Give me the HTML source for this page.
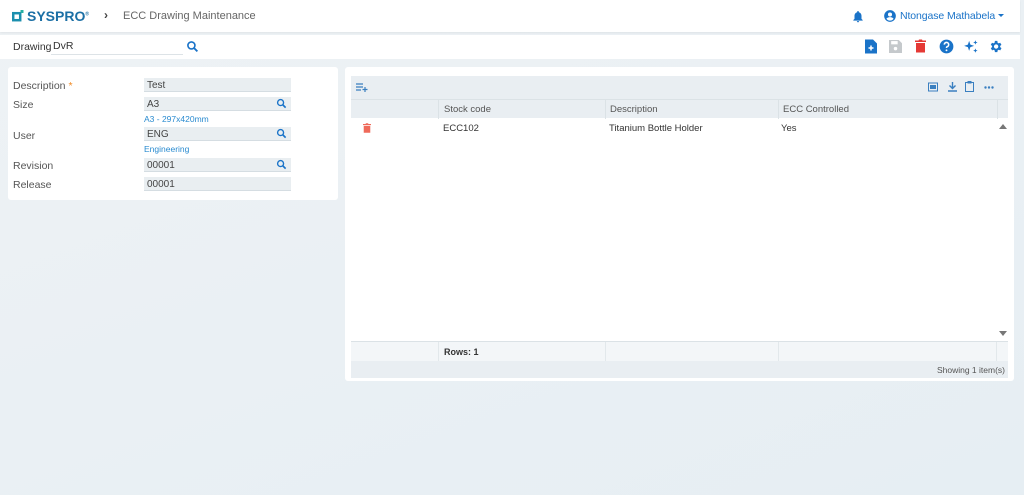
<!DOCTYPE html>
<html><head><style>
*{box-sizing:border-box;margin:0;padding:0}
body{width:1024px;height:495px;overflow:hidden;background:linear-gradient(160deg,#eef2f5,#e6eef3);font-family:"Liberation Sans",sans-serif;font-size:10px;color:#333;position:relative}
.abs{position:absolute}
.hdr{left:0;top:0;width:1020px;height:32px;background:#fff;box-shadow:0 1px 2px rgba(0,0,0,.06)}
.tb{left:0;top:35px;width:1020px;height:24px;background:#fff}
.panel{background:#fff;border-radius:3px}
.lbl{color:#555;font-size:10.5px}
.inp{background:#e9eef1;height:14px;border-bottom:1px solid #d5dde2;font-size:10px;padding:2px 3px;color:#444}
.hint{color:#2a8bd0;font-size:8.5px}
.ic{fill:#1a73c8}
</style></head><body>
<div class="abs hdr">
 <svg class="abs" style="left:12px;top:10px" width="12" height="12"><rect x="1.2" y="3.2" width="7" height="7" fill="none" stroke="#1b8fae" stroke-width="2.5"/><rect x="8.5" y="0" width="3" height="3" fill="#27b0a3"/></svg>
 <div class="abs" style="left:27px;top:8px;font-size:14px;font-weight:bold;color:#1b6fa5">SYSPRO<sup style="font-size:5px">®</sup></div>
 <div class="abs" style="left:104px;top:8px;font-size:12px;font-weight:bold;color:#444">›</div>
 <div class="abs" style="left:123px;top:10px;font-size:11px;color:#666">ECC Drawing Maintenance</div>
 <svg class="abs" style="left:851px;top:9px" width="14" height="15" viewBox="0 0 24 24"><path class="ic" d="M12 22a2 2 0 0 0 2-2h-4a2 2 0 0 0 2 2zm6-6V11c0-3-1.6-5.6-4.5-6.3V4a1.5 1.5 0 0 0-3 0v.7C7.6 5.4 6 8 6 11v5l-2 2v1h16v-1z"/></svg>
 <svg class="abs" style="left:883px;top:9px" width="14" height="14" viewBox="0 0 24 24"><path class="ic" d="M12 2a10 10 0 1 0 0 20 10 10 0 0 0 0-20zm0 4a3.5 3.5 0 1 1 0 7 3.5 3.5 0 0 1 0-7zm0 14a7.5 7.5 0 0 1-6-3c0-2 4-3.1 6-3.1s6 1.1 6 3.1a7.5 7.5 0 0 1-6 3z"/></svg>
 <div class="abs" style="left:900px;top:10px;font-size:10.5px;color:#1a73c8;letter-spacing:-0.1px">Ntongase Mathabela</div>
 <div class="abs" style="left:998px;top:14px;border:3px solid transparent;border-top:3px solid #1a73c8"></div>
</div>
<div class="abs tb">
 <div class="abs lbl" style="left:13px;top:6px;color:#333">Drawing</div>
 <div class="abs" style="left:51px;top:5px;width:132px;height:15px;border-bottom:1px solid #dde3e7;font-size:10.5px;padding-left:2px">DvR</div>
 <svg class="abs" style="left:186px;top:5px" width="13" height="13" viewBox="0 0 24 24"><circle cx="10" cy="10" r="6.5" fill="none" stroke="#1a73c8" stroke-width="3"/><path d="M15 15l6 6" stroke="#1a73c8" stroke-width="3.5"/></svg>
 <svg class="abs" style="left:865px;top:4px" width="12" height="15" viewBox="0 0 12 14"><path class="ic" d="M0 0h8l4 4v10H0z"/><path d="M6 6v5M3.5 8.5h5" stroke="#fff" stroke-width="1.5"/></svg>
 <svg class="abs" style="left:889px;top:5px" width="13" height="13" viewBox="0 0 12 12"><path fill="#c5c9cc" d="M0 0h9l3 3v9H0z"/><rect x="2" y="1" width="6" height="3" fill="#fff"/><circle cx="6" cy="8" r="1.6" fill="#fff"/></svg>
 <svg class="abs" style="left:915px;top:4px" width="11" height="14" viewBox="0 0 11 13"><path fill="#e53935" d="M0 1h3.5l.5-1h3l.5 1H11v1.5H0zM1 3.5h9V13H1z"/></svg>
 <svg class="abs" style="left:939px;top:4px" width="15" height="15" viewBox="0 0 24 24"><circle cx="12" cy="12" r="11" fill="#1a73c8"/><path d="M8.5 9a3.5 3.5 0 1 1 4.5 3.3c-.8.4-1 1-1 2" fill="none" stroke="#fff" stroke-width="2.5"/><circle cx="12" cy="18" r="1.5" fill="#fff"/></svg>
 <svg class="abs" style="left:963px;top:4px" width="16" height="15" viewBox="0 0 24 24"><path class="ic" d="M9 3l2 6 6 2-6 2-2 6-2-6-6-2 6-2zM19 2l1 2.5 2.5 1-2.5 1-1 2.5-1-2.5-2.5-1 2.5-1zM19 15l1 2.5 2.5 1-2.5 1-1 2.5-1-2.5-2.5-1 2.5-1z"/></svg>
 <svg class="abs" style="left:988px;top:4px" width="15" height="15" viewBox="0 0 24 24"><path class="ic" d="M19.4 13a7.5 7.5 0 0 0 0-2l2.1-1.6-2-3.5-2.5 1a7 7 0 0 0-1.7-1L15 3h-4l-.4 2.9a7 7 0 0 0-1.7 1l-2.5-1-2 3.5L6.6 11a7.5 7.5 0 0 0 0 2l-2.1 1.6 2 3.5 2.5-1a7 7 0 0 0 1.7 1L11 21h4l.4-2.9a7 7 0 0 0 1.7-1l2.5 1 2-3.5zM13 15.5a3.5 3.5 0 1 1 0-7 3.5 3.5 0 0 1 0 7z"/></svg>
</div>

<div class="abs panel" style="left:8px;top:67px;width:330px;height:133px">
 <div class="abs lbl" style="left:5px;top:13px">Description <span style="color:#f08a24">*</span></div>
 <div class="abs inp" style="left:136px;top:11px;width:147px">Test</div>
 <div class="abs lbl" style="left:5px;top:32px">Size</div>
 <div class="abs inp" style="left:136px;top:30px;width:147px">A3</div>
 <div class="abs hint" style="left:136px;top:47px">A3 - 297x420mm</div>
 <div class="abs lbl" style="left:5px;top:63px">User</div>
 <div class="abs inp" style="left:136px;top:60px;width:147px">ENG</div>
 <div class="abs hint" style="left:136px;top:77px">Engineering</div>
 <div class="abs lbl" style="left:5px;top:93px">Revision</div>
 <div class="abs inp" style="left:136px;top:91px;width:147px">00001</div>
 <div class="abs lbl" style="left:5px;top:112px">Release</div>
 <div class="abs inp" style="left:136px;top:110px;width:147px">00001</div>
 <svg class="abs" style="left:268px;top:31px" width="11" height="11" viewBox="0 0 24 24"><circle cx="10" cy="10" r="6.5" fill="none" stroke="#1a73c8" stroke-width="3"/><path d="M15 15l6 6" stroke="#1a73c8" stroke-width="3.5"/></svg>
 <svg class="abs" style="left:268px;top:61px" width="11" height="11" viewBox="0 0 24 24"><circle cx="10" cy="10" r="6.5" fill="none" stroke="#1a73c8" stroke-width="3"/><path d="M15 15l6 6" stroke="#1a73c8" stroke-width="3.5"/></svg>
 <svg class="abs" style="left:268px;top:92px" width="11" height="11" viewBox="0 0 24 24"><circle cx="10" cy="10" r="6.5" fill="none" stroke="#1a73c8" stroke-width="3"/><path d="M15 15l6 6" stroke="#1a73c8" stroke-width="3.5"/></svg>
</div>

<div class="abs panel" style="left:345px;top:67px;width:669px;height:314px">
 <div class="abs" style="left:6px;top:9px;width:657px;height:300px;background:#fff">
  <div class="abs" style="left:0;top:0;width:657px;height:23px;background:#e9eef2">
   <svg class="abs" style="left:5px;top:7px" width="12" height="9" viewBox="0 0 12 9"><path d="M0 1h7M0 4h7M0 7h5M9 4v5M6.5 6.5h5" stroke="#3a7fc0" stroke-width="1.2"/></svg>
   <svg class="abs" style="left:577px;top:6px" width="10" height="10"><rect x="0.5" y="1" width="9" height="8" fill="none" stroke="#3a7fc0"/><rect x="2" y="3" width="6" height="4" fill="#3a7fc0"/></svg>
   <svg class="abs" style="left:597px;top:6px" width="9" height="10"><path d="M4.5 0v6M1.5 3.5l3 3 3-3M0 9h9" stroke="#3a7fc0" stroke-width="1.4" fill="none"/></svg>
   <svg class="abs" style="left:614px;top:5px" width="9" height="11"><rect x="0.5" y="1.5" width="8" height="9" fill="none" stroke="#3a7fc0"/><rect x="2.5" y="0" width="4" height="2.5" fill="#3a7fc0"/></svg>
   <svg class="abs" style="left:633px;top:10px" width="10" height="3"><circle cx="1.5" cy="1.5" r="1.2" fill="#3a7fc0"/><circle cx="5" cy="1.5" r="1.2" fill="#3a7fc0"/><circle cx="8.5" cy="1.5" r="1.2" fill="#3a7fc0"/></svg>
  </div>
  <div class="abs" style="left:0;top:23px;width:657px;height:19px;background:#e9eef2;border-top:1px solid #dbe2e6;color:#555;font-size:9.5px">
   <div class="abs" style="left:87px;top:0;height:19px;border-left:1px solid #dbe2e6;padding:4px 5px;width:167px">Stock code</div>
   <div class="abs" style="left:254px;top:0;height:19px;border-left:1px solid #dbe2e6;padding:4px 4px;width:173px">Description</div>
   <div class="abs" style="left:427px;top:0;height:19px;border-left:1px solid #dbe2e6;padding:4px 4px;width:219px">ECC Controlled</div>
   <div class="abs" style="left:646px;top:0;height:19px;border-left:1px solid #dbe2e6;width:11px"></div>
  </div>
  <svg class="abs" style="left:12px;top:47px" width="8" height="10" viewBox="0 0 11 13"><path fill="#ef6a5a" d="M0 1h3.5l.5-1h3l.5 1H11v1.5H0zM1 3.5h9V13H1z"/></svg>
  <div class="abs" style="left:92px;top:47px;font-size:9.5px">ECC102</div>
  <div class="abs" style="left:258px;top:47px;font-size:9.5px">Titanium Bottle Holder</div>
  <div class="abs" style="left:430px;top:47px;font-size:9.5px">Yes</div>
  <div class="abs" style="left:648px;top:48px;border:4px solid transparent;border-bottom:5px solid #777;border-top:0"></div>
  <div class="abs" style="left:648px;top:255px;border:4px solid transparent;border-top:5px solid #777;border-bottom:0"></div>
  <div class="abs" style="left:0;top:265px;width:657px;height:20px;background:#f3f6f8;border-top:1px solid #dbe2e6;font-size:9px;font-weight:bold">
   <div class="abs" style="left:87px;top:0;height:19px;border-left:1px solid #e2e8eb;padding:5px 5px;width:167px">Rows: 1</div>
   <div class="abs" style="left:254px;top:0;height:19px;border-left:1px solid #e2e8eb;width:173px"></div>
   <div class="abs" style="left:427px;top:0;height:19px;border-left:1px solid #e2e8eb;width:219px;border-right:1px solid #e2e8eb"></div>
  </div>
  <div class="abs" style="left:0;top:285px;width:657px;height:17px;background:#e9eef2;font-size:8.5px;color:#555;text-align:right;padding:4px 3px">Showing 1 item(s)</div>
 </div>
</div>
</body></html>
